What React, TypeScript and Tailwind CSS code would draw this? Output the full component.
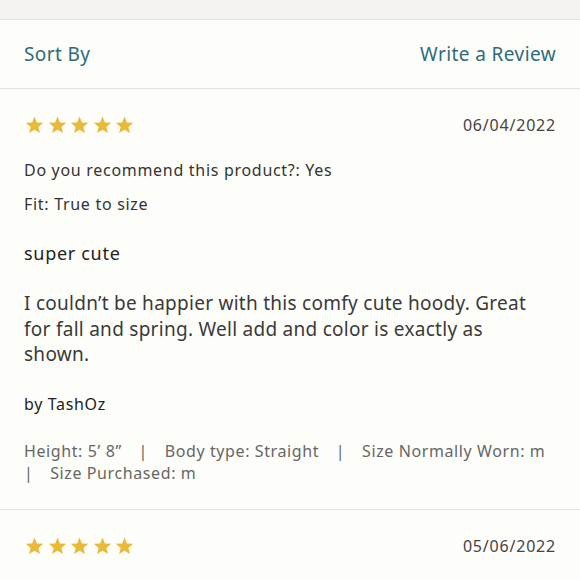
import React from "react";

const Star = () => (
  <svg width="21" height="20" viewBox="0 0 24 24" className="block">
    <path
      d="M12 1.8l2.9 7.1 7.6.5-5.8 4.9 1.9 7.4L12 17.6l-6.5 4.1 1.9-7.4L1.6 9.4l7.6-.5z"
      fill="#e9b93a"
    />
  </svg>
);

const Stars = () => (
  <div className="flex gap-[1.6px]">
    <Star />
    <Star />
    <Star />
    <Star />
    <Star />
  </div>
);

const Gap = () => <span className="[word-spacing:12px]"> </span>;

export default function App() {
  return (
    <div
      className="w-[580px] h-[580px] overflow-hidden bg-[#fdfdfa] text-[#333]"
      style={{ fontFamily: "'Noto Sans', Lato, sans-serif" }}
    >
      <div className="h-[20px] bg-[#f4f3f1] border-b border-[#e4e3e0]" />
      <div className="flex justify-between items-center h-[69px] px-6 border-b border-[#e4e3e0] text-[19px] text-[#2e6c7b] tracking-[0.4px]">
        <span>Sort By</span>
        <span>Write a Review</span>
      </div>
      <div className="px-6 pt-[26px] border-b border-[#e4e3e0] h-[421px]">
        <div className="flex justify-between items-center h-[20px]">
          <Stars />
          <span className="text-[16px] leading-[20px] tracking-[0.8px] text-[#444]">06/04/2022</span>
        </div>
        <div className="mt-[25px] text-[16px] leading-[20px] tracking-[0.7px] text-[#333]">
          Do you recommend this product?: Yes
        </div>
        <div className="mt-[14px] text-[16px] leading-[20px] tracking-[0.7px] text-[#333]">
          Fit: True to size
        </div>
        <div className="mt-[28px] text-[18px] leading-[22px] tracking-[0.7px] text-[#222]">
          super cute
        </div>
        <p className="mt-[27px] text-[19px] leading-[25.5px] tracking-[0.27px] text-[#3a3a3a] pr-4">
          I couldn’t be happier with this comfy cute hoody. Great for fall and spring. Well add and color is exactly as shown.
        </p>
        <div className="mt-[26px] text-[16px] leading-[20px] tracking-[0.65px] text-[#222]">by TashOz</div>
        <div className="mt-[26px] text-[16px] leading-[22px] tracking-[0.6px] text-[#666]">
          Height: 5’ 8”<Gap />
          <span className="whitespace-nowrap">|<Gap />Body type: Straight</span>
          <Gap />
          <span className="whitespace-nowrap">|<Gap />Size Normally Worn: m</span>
          <Gap />
          <span className="whitespace-nowrap">|<Gap />Size Purchased: m</span>
        </div>
      </div>
      <div className="px-6 pt-[26px]">
        <div className="flex justify-between items-center h-[20px]">
          <Stars />
          <span className="text-[16px] leading-[20px] tracking-[0.8px] text-[#444]">05/06/2022</span>
        </div>
      </div>
    </div>
  );
}
